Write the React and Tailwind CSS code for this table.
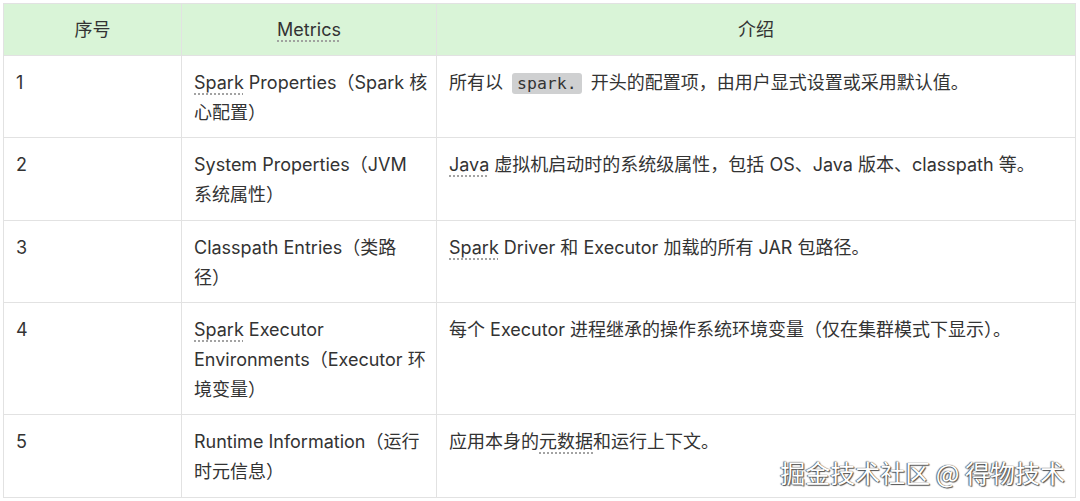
import React from 'react';

const dot = 'underline decoration-dotted decoration-[#9a9a9a] underline-offset-[5px]';

const rows = [
  {
    id: '1',
    h: 'h-[81px]',
    metric: <><span className={dot}>Spark</span> Properties（Spark 核<br />心配置）</>,
    desc: (
      <>
        所有以{' '}
        <code className="mx-1 rounded-[3px] bg-[#cfd0d1] px-[5px] py-[1px] font-['DejaVu_Sans_Mono',monospace] text-[16.5px] text-[#333]">spark.</code>{' '}
        开头的配置项，由用户显式设置或采用默认值。
      </>
    ),
  },
  {
    id: '2',
    h: 'h-[83px]',
    metric: <>System Properties（JVM<br />系统属性）</>,
    desc: <><span className={dot}>Java</span> 虚拟机启动时的系统级属性，包括 OS、Java 版本、classpath 等。</>,
  },
  {
    id: '3',
    h: 'h-[81px]',
    metric: <>Classpath Entries（类路<br />径）</>,
    desc: <><span className={dot}>Spark</span> Driver 和 Executor 加载的所有 JAR 包路径。</>,
  },
  {
    id: '4',
    h: 'h-[112px]',
    metric: <><span className={dot}>Spark</span> Executor<br />Environments（Executor 环<br />境变量）</>,
    desc: <>每个 Executor 进程继承的操作系统环境变量（仅在集群模式下显示）。</>,
  },
  {
    id: '5',
    h: 'h-[83px]',
    metric: <>Runtime Information（运行<br />时元信息）</>,
    desc: <>应用本身的<span className={dot}>元数据</span>和运行上下文。</>,
  },
];

export default function App() {
  return (
    <div className="relative h-[501px] w-[1080px] overflow-hidden bg-white pl-[3px] pt-[3px] font-['Inter','Noto_Sans_CJK_SC',sans-serif] text-[18px] leading-[30px] text-[#333]">
      <table className="w-[1073px] table-fixed border-collapse">
        <colgroup>
          <col className="w-[178px]" />
          <col className="w-[255px]" />
          <col />
        </colgroup>
        <thead>
          <tr className="h-[52px] bg-[#d9f4d7]">
            <th className="border border-[#e2e2e2] text-center font-normal">序号</th>
            <th className="border border-[#e2e2e2] text-center font-normal">
              <span className={dot}>Metrics</span>
            </th>
            <th className="border border-[#e2e2e2] text-center font-normal">介绍</th>
          </tr>
        </thead>
        <tbody>
          {rows.map((r) => (
            <tr key={r.id} className={r.h}>
              <td className="border border-[#e2e2e2] px-3 pb-[9px] pt-[12px] align-top">{r.id}</td>
              <td className="whitespace-nowrap border border-[#e2e2e2] px-3 pb-[9px] pt-[12px] align-top">{r.metric}</td>
              <td className="border border-[#e2e2e2] px-3 pb-[9px] pt-[12px] align-top">{r.desc}</td>
            </tr>
          ))}
        </tbody>
      </table>

      {/* watermark */}
      <div className="absolute bottom-[13px] right-[15px] font-['Noto_Sans_CJK_SC',sans-serif] text-[25px] leading-[32px] text-white [text-shadow:0_0_1px_#333,1px_1px_1px_#555,-1px_0_1px_#777]">
        掘金技术社区 @ 得物技术
      </div>
    </div>
  );
}
